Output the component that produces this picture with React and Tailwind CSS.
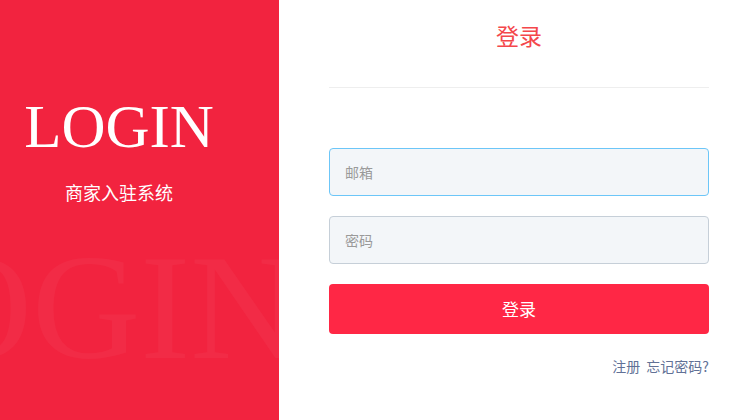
export default function App() {
  return (
    <div className="flex w-[751px] h-[420px] bg-white overflow-hidden font-['Noto_Sans_CJK_SC',sans-serif]">
      <div className="relative w-[279px] h-full bg-[#f2233f] overflow-hidden shrink-0">
        <span className="absolute left-[-168px] top-[232px] text-[150px] leading-none text-white/[0.04] font-['Liberation_Serif',serif] select-none whitespace-nowrap">
          LOGIN
        </span>
        <div className="relative flex flex-col items-center w-[238px] pt-[95px]">
          <h1 className="text-[61px] leading-[64px] text-white font-['Liberation_Serif',serif] font-normal">
            LOGIN
          </h1>
          <p className="mt-[21px] text-[18px] leading-[24px] text-white">商家入驻系统</p>
        </div>
      </div>

      <div className="flex-1 pl-[50px]">
        <div className="w-[380px] pt-[20px]">
          <h2 className="text-center text-[23px] leading-[30px] text-[#f4474b]">登录</h2>
          <div className="mt-[37px] h-px bg-[#eeeeee]" />

          <input
            type="text"
            placeholder="邮箱"
            className="mt-[60px] block w-full h-[48px] px-[15px] rounded-[4px] border border-[#6cc6f8] bg-[#f3f6f9] text-[14px] text-[#333] placeholder:text-[#9a9a9a] outline-none"
          />
          <input
            type="password"
            placeholder="密码"
            className="mt-[20px] block w-full h-[48px] px-[15px] rounded-[4px] border border-[#c6cfd8] bg-[#f3f6f9] text-[14px] text-[#333] placeholder:text-[#9a9a9a] outline-none"
          />
          <button className="mt-[20px] block w-full h-[50px] rounded-[4px] bg-[#ff2745] text-white text-[17px]">
            登录
          </button>

          <div className="mt-[22px] flex justify-end gap-[6px] text-[14px] leading-[20px] text-[#617196]">
            <a>注册</a>
            <a>忘记密码?</a>
          </div>
        </div>
      </div>
    </div>
  );
}
